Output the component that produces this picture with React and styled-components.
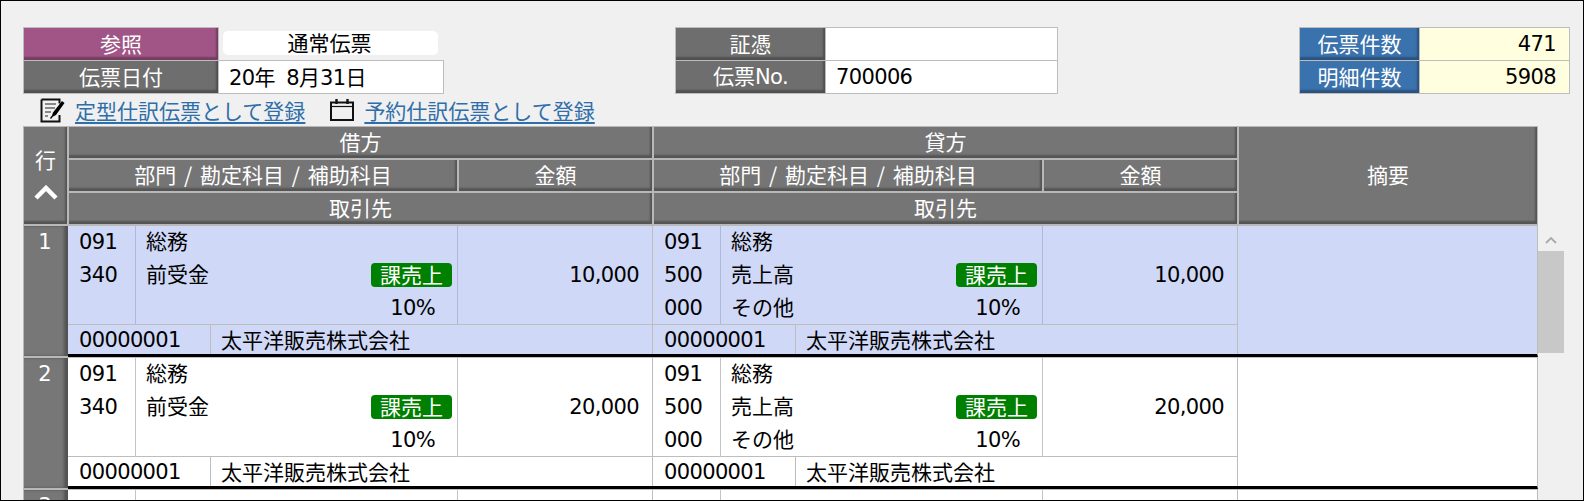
import styled, { createGlobalStyle } from "styled-components";

const GlobalStyle = createGlobalStyle`
  html, body {
    margin: 0;
    padding: 0;
    background: #f0f0f0;
  }
  * {
    box-sizing: border-box;
  }
`;

const Page = styled.div`
  width: 1584px;
  height: 501px;
  overflow: hidden;
  border: 1px solid #000;
  background: #f0f0f0;
  color: #000;
  font-family: "Noto Sans CJK JP", "Noto Sans", sans-serif;
  font-size: 21px;
  line-height: 1;
`;

const Num = styled.span`
  font-family: "DejaVu Sans", sans-serif;
  font-size: 21px;
  letter-spacing: -0.64px;
`;

const TopBar = styled.div`
  display: flex;
  padding: 26px 13px 0 22px;
`;

const LeftGroup = styled.div`
  display: flex;
  flex-direction: column;
  width: 421px;
  margin-right: 231px;
`;

const RefRow = styled.div`
  display: flex;
  margin-bottom: -1px;
`;

const RefValue = styled.div`
  width: 215px;
  height: 24px;
  margin: 4px 0 0 4px;
  padding: 0 2px 2px 0;
  border-radius: 5px;
  background: #fff;
  display: flex;
  align-items: center;
  justify-content: center;
`;

const FieldGrid = styled.div`
  display: grid;
  grid-template-columns: ${(p) => p.$cols};
  grid-auto-rows: 32px;
  gap: 1px;
  padding: 1px;
  background: #bdbdbd;
  margin-left: ${(p) => (p.$push ? "auto" : "0")};
`;

const FieldLabel = styled.div`
  display: flex;
  align-items: center;
  justify-content: center;
  padding-bottom: 2px;
  color: #fff;
  background: ${(p) => p.$bg || "#6e6e6e"};
  box-shadow: inset -2px -3px 2px rgba(0, 0, 0, 0.28);
`;

const FieldValue = styled.div`
  display: flex;
  align-items: center;
  justify-content: ${(p) => (p.$right ? "flex-end" : "flex-start")};
  padding: ${(p) => (p.$right ? "0 13px 0 0" : "0 0 0 10px")};
  background: ${(p) => p.$bg || "#fff"};
`;

const LinkRow = styled.div`
  display: flex;
  align-items: center;
  height: 32px;
  padding-left: 39px;
`;

const IconLink = styled.a`
  color: #2f6ea8;
  text-decoration: underline;
  text-underline-offset: 3px;
  margin-left: ${(p) => p.$gap}px;
  margin-right: 25px;
  white-space: nowrap;
`;

const TableWrap = styled.div`
  padding-left: 22px;
`;

const HeadGrid = styled.div`
  display: grid;
  width: 1515px;
  grid-template-columns: 43px 388px 193px 388px 193px 298px;
  grid-template-rows: repeat(3, 31px);
  gap: 2px;
  padding: 1px 1px 2px;
  background: #b8b8b8;
`;

const HeadCell = styled.div`
  grid-column: ${(p) => p.$col};
  grid-row: ${(p) => p.$row};
  display: flex;
  flex-direction: ${(p) => (p.$stack ? "column" : "row")};
  gap: ${(p) => (p.$stack ? "15px" : "0")};
  align-items: center;
  justify-content: center;
  padding-bottom: 3px;
  color: #fff;
  background: #757575;
  word-spacing: 3px;
  box-shadow: inset -2px -3px 2px rgba(0, 0, 0, 0.28);
`;

const BodyWrap = styled.div`
  display: flex;
  align-items: flex-start;
`;

const Rows = styled.div`
  width: 1515px;
`;

const Row = styled.div`
  display: grid;
  grid-template-columns: 45px 1fr;
  height: 132px;
`;

const RowNum = styled.div`
  display: flex;
  justify-content: center;
  padding: 6px 3px 0 0;
  color: #fff;
  background: #777;
  border-left: 1px solid #b8b8b8;
  border-bottom: 2px solid #b8b8b8;
  box-shadow: inset -4px 0 3px rgba(0, 0, 0, 0.3);
`;

const RowMain = styled.div`
  display: grid;
  grid-template-columns: 585px 585px 1fr;
  height: 131px;
  background: ${(p) => (p.$selected ? "#cfd8f6" : "#fff")};
  border-bottom: 3px solid #000;
  border-right: 1px solid #bdbdbd;
  box-shadow: 0 1px 0 #bdbdbd;
  --line: ${(p) => (p.$selected ? "#aeb8d8" : "#c4c4c4")};
`;

const Side = styled.div`
  display: flex;
  flex-direction: column;
  border-right: 1px solid #bdbdbd;
`;

const Lines = styled.div`
  display: grid;
  grid-template-columns: 68px 322px 1fr;
  height: 99px;
  border-bottom: 1px solid #bdbdbd;
`;

const LineCell = styled.div`
  display: grid;
  grid-template-rows: 32px 33px 33px;
  padding-left: ${(p) => p.$pad}px;
  padding-top: ${(p) => p.$top || 0}px;
  border-right: 1px solid var(--line);
`;

const Line = styled.div`
  display: flex;
  align-items: center;
  justify-content: space-between;
  padding-bottom: ${(p) => (p.$lift ? "2px" : "0")};
`;

const Name = styled.span`
  margin-bottom: 2px;
`;

const Badge = styled.span`
  display: flex;
  align-items: center;
  justify-content: center;
  width: 81px;
  height: 24px;
  margin-right: 5px;
  padding-bottom: 1px;
  border-radius: 4px;
  color: #fff;
  background: #008000;
`;

const Tax = styled(Num)`
  margin: 2px 22px 0 auto;
`;

const Amount = styled.div`
  display: flex;
  align-items: center;
  justify-content: flex-end;
  padding-right: 13px;
`;

const Partner = styled.div`
  display: grid;
  grid-template-columns: 143px 1fr;
  flex: 1;
`;

const PartnerCell = styled.div`
  display: flex;
  align-items: center;
  padding-left: ${(p) => p.$pad}px;
  padding-top: ${(p) => p.$top || 0}px;
  border-right: ${(p) => (p.$divider ? "1px solid #bdbdbd" : "0")};
`;

const ScrollBar = styled.div`
  width: 26px;
  display: flex;
  flex-direction: column;
  align-items: center;
`;

const ScrollArrow = styled.svg`
  width: 12px;
  height: 8px;
  margin: 10px 0 7px;
`;

const ScrollThumb = styled.div`
  width: 26px;
  height: 102px;
  background: #c8c8c8;
`;

const NoteIcon = () => (
  <svg width="25" height="25" viewBox="0 0 25 25">
    <path d="M1.5 1.5h18v4M19.5 17v6.5h-18v-22" fill="none" stroke="#111" strokeWidth="2" />
    <path d="M5 6h11M5 10h10M5 14h6M5 18h3" stroke="#666" strokeWidth="1.5" />
    <path d="M22 3l2.5 2-8.5 12-3 1.5-2 2.5-1-1 2-2.5 1-3z" fill="#000" />
  </svg>
);

const CalendarIcon = () => (
  <svg width="24" height="22" viewBox="0 0 24 22">
    <rect x="1" y="3.5" width="22" height="17.5" fill="none" stroke="#111" strokeWidth="2" />
    <path d="M1 7.5h22" stroke="#111" strokeWidth="1.2" />
    <path d="M6.5 0v5M17.5 0v5" stroke="#111" strokeWidth="2.4" />
  </svg>
);

const Entry = ({ dept, account, sub, subName, amount }) => (
  <Side>
    <Lines>
      <LineCell $pad={11} $top={1}>
        <Line $lift><Num>{dept}</Num></Line>
        <Line><Num>{account}</Num></Line>
        <Line><Num>{sub}</Num></Line>
      </LineCell>
      <LineCell $pad={10}>
        <Line $lift><Name>総務</Name></Line>
        <Line>
          <Name>{account === "340" ? "前受金" : "売上高"}</Name>
          <Badge>課売上</Badge>
        </Line>
        <Line>
          <Name>{subName}</Name>
          <Tax>10%</Tax>
        </Line>
      </LineCell>
      <Amount><Num>{amount}</Num></Amount>
    </Lines>
    <Partner>
      <PartnerCell $pad={11} $top={2} $divider><Num>00000001</Num></PartnerCell>
      <PartnerCell $pad={10}>太平洋販売株式会社</PartnerCell>
    </Partner>
  </Side>
);

const EmptyEntry = () => (
  <Side>
    <Lines>
      <LineCell />
      <LineCell />
    </Lines>
  </Side>
);

const rows = [
  { no: 1, amount: "10,000", selected: true },
  { no: 2, amount: "20,000" },
];

export default function App() {
  return (
    <Page>
      <GlobalStyle />
      <TopBar>
        <LeftGroup>
          <RefRow>
            <FieldGrid $cols="194px">
              <FieldLabel $bg="#a05586">参照</FieldLabel>
            </FieldGrid>
            <RefValue>通常伝票</RefValue>
          </RefRow>
          <FieldGrid $cols="194px 224px">
            <FieldLabel>伝票日付</FieldLabel>
            <FieldValue>
              <span><Num>20</Num>年 <Num>&nbsp;8</Num>月<Num>31</Num>日</span>
            </FieldValue>
          </FieldGrid>
        </LeftGroup>
        <FieldGrid $cols="149px 231px">
          <FieldLabel>証憑</FieldLabel>
          <FieldValue />
          <FieldLabel><span>伝票<Num>No.</Num></span></FieldLabel>
          <FieldValue><Num>700006</Num></FieldValue>
        </FieldGrid>
        <FieldGrid $cols="119px 149px" $push>
          <FieldLabel $bg="#3a72ad">伝票件数</FieldLabel>
          <FieldValue $bg="#ffffe0" $right><Num>471</Num></FieldValue>
          <FieldLabel $bg="#3a72ad">明細件数</FieldLabel>
          <FieldValue $bg="#ffffe0" $right><Num>5908</Num></FieldValue>
        </FieldGrid>
      </TopBar>
      <LinkRow>
        <NoteIcon />
        <IconLink $gap={10}>定型仕訳伝票として登録</IconLink>
        <CalendarIcon />
        <IconLink $gap={10}>予約仕訳伝票として登録</IconLink>
      </LinkRow>
      <TableWrap>
        <HeadGrid>
          <HeadCell $col="1" $row="1 / span 3" $stack>
            行
            <svg width="24" height="15" viewBox="0 0 24 15">
              <path d="M2 13L12 3l10 10" fill="none" stroke="#fff" strokeWidth="4.5" />
            </svg>
          </HeadCell>
          <HeadCell $col="2 / span 2" $row="1">借方</HeadCell>
          <HeadCell $col="4 / span 2" $row="1">貸方</HeadCell>
          <HeadCell $col="6" $row="1 / span 3">摘要</HeadCell>
          <HeadCell $col="2" $row="2">部門 / 勘定科目 / 補助科目</HeadCell>
          <HeadCell $col="3" $row="2">金額</HeadCell>
          <HeadCell $col="4" $row="2">部門 / 勘定科目 / 補助科目</HeadCell>
          <HeadCell $col="5" $row="2">金額</HeadCell>
          <HeadCell $col="2 / span 2" $row="3">取引先</HeadCell>
          <HeadCell $col="4 / span 2" $row="3">取引先</HeadCell>
        </HeadGrid>
        <BodyWrap>
          <Rows>
            {rows.map((r) => (
              <Row key={r.no}>
                <RowNum><Num>{r.no}</Num></RowNum>
                <RowMain $selected={r.selected}>
                  <Entry dept="091" account="340" amount={r.amount} />
                  <Entry dept="091" account="500" sub="000" subName="その他" amount={r.amount} />
                  <div />
                </RowMain>
              </Row>
            ))}
            <Row>
              <RowNum><Num>3</Num></RowNum>
              <RowMain>
                <EmptyEntry />
                <EmptyEntry />
                <div />
              </RowMain>
            </Row>
          </Rows>
          <ScrollBar>
            <ScrollArrow viewBox="0 0 12 8">
              <path d="M1 7l5-5 5 5" fill="none" stroke="#aaa" strokeWidth="1.8" />
            </ScrollArrow>
            <ScrollThumb />
          </ScrollBar>
        </BodyWrap>
      </TableWrap>
    </Page>
  );
}
